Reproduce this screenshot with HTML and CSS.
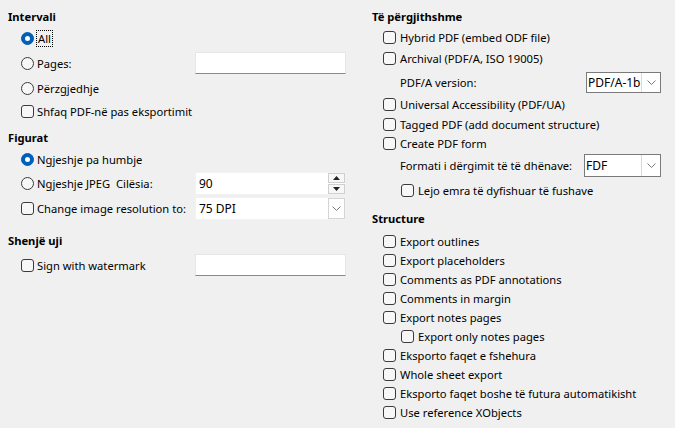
FILE: index.html
```html
<!DOCTYPE html>
<html>
<head>
<meta charset="utf-8">
<link rel="stylesheet" href="styles.css">
</head>
<body>
<div class="page">
  <div class="col left">
    <div class="title">Intervali</div>
    <div class="row h22"><span class="opt"><span class="radio on"></span><span class="focus">All</span></span></div>
    <div class="row h28"><span class="opt"><span class="radio"></span><span>Pages:</span></span><span class="field line"></span></div>
    <div class="row h22"><span class="opt"><span class="radio"></span><span>Përzgjedhje</span></span></div>
    <div class="row h24"><span class="opt"><span class="check"></span><span>Shfaq PDF-në pas eksportimit</span></span></div>

    <div class="title gap5">Figurat</div>
    <div class="row h23"><span class="opt"><span class="radio on"></span><span>Ngjeshje pa humbje</span></span></div>
    <div class="row h24"><span class="opt"><span class="radio"></span><span>Ngjeshje JPEG&nbsp; Cilësia:</span></span>
      <span class="field spin"><span class="val">90</span><span class="spinbtns"><span class="sb"><svg width="7" height="4" viewBox="0 0 7 4"><path d="M3.5 0 L7 4 L0 4 Z" fill="#222"/></svg></span><span class="sb"><svg width="7" height="4" viewBox="0 0 7 4"><path d="M0 0 L7 0 L3.5 4 Z" fill="#222"/></svg></span></span></span>
    </div>
    <div class="row h26"><span class="opt"><span class="check"></span><span>Change image resolution to:</span></span>
      <span class="field combo"><span class="val">75 DPI</span><span class="dropbtn"><svg width="9" height="5" viewBox="0 0 9 5"><path d="M0.5 0.5 L4.5 4.5 L8.5 0.5" stroke="#777" fill="none"/></svg></span></span>
    </div>

    <div class="title gap10">Shenjë uji</div>
    <div class="row h28"><span class="opt"><span class="check"></span><span>Sign with watermark</span></span><span class="field line"></span></div>
  </div>

  <div class="col right">
    <div class="title">Të përgjithshme</div>
    <div class="row h21"><span class="check"></span><span>Hybrid PDF (embed ODF file)</span></div>
    <div class="row h20"><span class="check"></span><span>Archival (PDF/A, ISO 19005)</span></div>
    <div class="row h26 sub pt2"><span class="lbl">PDF/A version:</span>
      <span class="box pdfa"><span class="val">PDF/A-1b</span><span class="dropbtn"><svg width="9" height="5" viewBox="0 0 9 5"><path d="M0.5 0.5 L4.5 4.5 L8.5 0.5" stroke="#777" fill="none"/></svg></span></span>
    </div>
    <div class="row h21"><span class="check"></span><span>Universal Accessibility (PDF/UA)</span></div>
    <div class="row h19"><span class="check"></span><span>Tagged PDF (add document structure)</span></div>
    <div class="row h19"><span class="check"></span><span>Create PDF form</span></div>
    <div class="row h24 sub"><span class="lbl">Formati i dërgimit të të dhënave:</span>
      <span class="box fdf"><span class="val">FDF</span><span class="dropbtn"><svg width="9" height="5" viewBox="0 0 9 5"><path d="M0.5 0.5 L4.5 4.5 L8.5 0.5" stroke="#777" fill="none"/></svg></span></span>
    </div>
    <div class="row h26 sub2"><span class="check"></span><span>Lejo emra të dyfishuar të fushave</span></div>

    <div class="title gap6">Structure</div>
    <div class="list">
      <div class="row h19"><span class="check"></span><span>Export outlines</span></div>
      <div class="row h19"><span class="check"></span><span>Export placeholders</span></div>
      <div class="row h19"><span class="check"></span><span>Comments as PDF annotations</span></div>
      <div class="row h19"><span class="check"></span><span>Comments in margin</span></div>
      <div class="row h19"><span class="check"></span><span>Export notes pages</span></div>
      <div class="row h19 sub2"><span class="check"></span><span>Export only notes pages</span></div>
      <div class="row h19"><span class="check"></span><span>Eksporto faqet e fshehura</span></div>
      <div class="row h19"><span class="check"></span><span>Whole sheet export</span></div>
      <div class="row h19"><span class="check"></span><span>Eksporto faqet boshe të futura automatikisht</span></div>
      <div class="row h19"><span class="check"></span><span>Use reference XObjects</span></div>
    </div>
  </div>
</div>
</body>
</html>
```

FILE: styles.css
```css
html, body {
  margin: 0;
  padding: 0;
}
body {
  background: #f0f0f0;
  color: #000;
  font-family: "Noto Sans", "Open Sans", "DejaVu Sans", sans-serif;
  font-size: 11.2px;
  width: 675px;
  height: 428px;
  overflow: hidden;
}
.page {
  display: grid;
  grid-template-columns: 338px 289px;
  column-gap: 26px;
  padding: 7px 0 0 8px;
}
.col {
  display: flex;
  flex-direction: column;
}
.title {
  height: 20px;
  line-height: 20px;
  font-weight: bold;
}
.gap5 { margin-top: 5px; }
.gap6 { margin-top: 6px; }
.gap10 { margin-top: 10px; }
.row {
  display: flex;
  align-items: center;
  white-space: nowrap;
}
.h19 { height: 19px; }
.h20 { height: 20px; }
.h21 { height: 21px; }
.h22 { height: 22px; }
.h23 { height: 23px; }
.h24 { height: 24px; }
.h26 { height: 26px; }
.h28 { height: 28px; }
.pt2 { padding-top: 2px; box-sizing: border-box; }

.left .row {
  padding-left: 13px;
}
.opt {
  display: flex;
  align-items: center;
  width: 174px;
}
.right .row {
  padding-left: 11px;
}
.right .row.sub {
  padding-left: 28px;
  justify-content: space-between;
}
.right .row.sub2 {
  padding-left: 29px;
}
.list {
  margin-top: 3px;
  display: flex;
  flex-direction: column;
}

.radio {
  width: 13px;
  height: 13px;
  box-sizing: border-box;
  border: 1px solid #3b3b3b;
  border-radius: 50%;
  margin-right: 3px;
  background: #f7f7f7;
  flex: none;
  position: relative;
}
.radio.on {
  background: #005fb8;
  border-color: #005fb8;
}
.radio.on::after {
  content: "";
  position: absolute;
  left: 3px;
  top: 3px;
  width: 5px;
  height: 5px;
  border-radius: 50%;
  background: #fff;
}
.check {
  width: 13px;
  height: 13px;
  box-sizing: border-box;
  border: 1px solid #3b3b3b;
  border-radius: 3px;
  background: #f7f7f7;
  margin-right: 4px;
  flex: none;
}
.left .check {
  margin-right: 3px;
}
.focus {
  outline: 1px dotted #000;
  outline-offset: 0;
  padding: 0 1px;
  line-height: 15px;
}

.field {
  width: 151px;
  box-sizing: border-box;
  background: #fff;
  display: flex;
  align-items: center;
}
.field.line {
  height: 22px;
  border: 1px solid #e6e6e6;
  border-bottom: 1px solid #8a8a8a;
}
.field.spin {
  height: 23px;
  border: 1px solid #f2f2f2;
}
.field.combo {
  height: 23px;
  border: 1px solid #f2f2f2;
}
.val {
  flex: 1;
  padding-left: 3px;
  font-size: 12px;
}
.spinbtns {
  width: 17px;
  height: 21px;
  display: flex;
  flex-direction: column;
  justify-content: space-between;
}
.sb {
  height: 10px;
  box-sizing: border-box;
  border: 1px solid #cfcfcf;
  background: #f7f7f7;
  display: flex;
  align-items: center;
  justify-content: center;
}
.dropbtn {
  width: 17px;
  height: 100%;
  box-sizing: border-box;
  border: 1px solid #d4d4d4;
  background: #fff;
  display: flex;
  align-items: center;
  justify-content: center;
}
.box {
  display: flex;
  align-items: stretch;
  box-sizing: border-box;
  border: 1px solid #7a7a7a;
  background: #fff;
}
.box .val {
  display: flex;
  align-items: center;
  padding-left: 1px;
}
.box .dropbtn {
  border: none;
  border-left: 1px solid #d9d9d9;
  width: 19px;
  height: auto;
}
.pdfa {
  width: 75px;
  height: 21px;
}
.fdf {
  width: 77px;
  height: 23px;
}
```
